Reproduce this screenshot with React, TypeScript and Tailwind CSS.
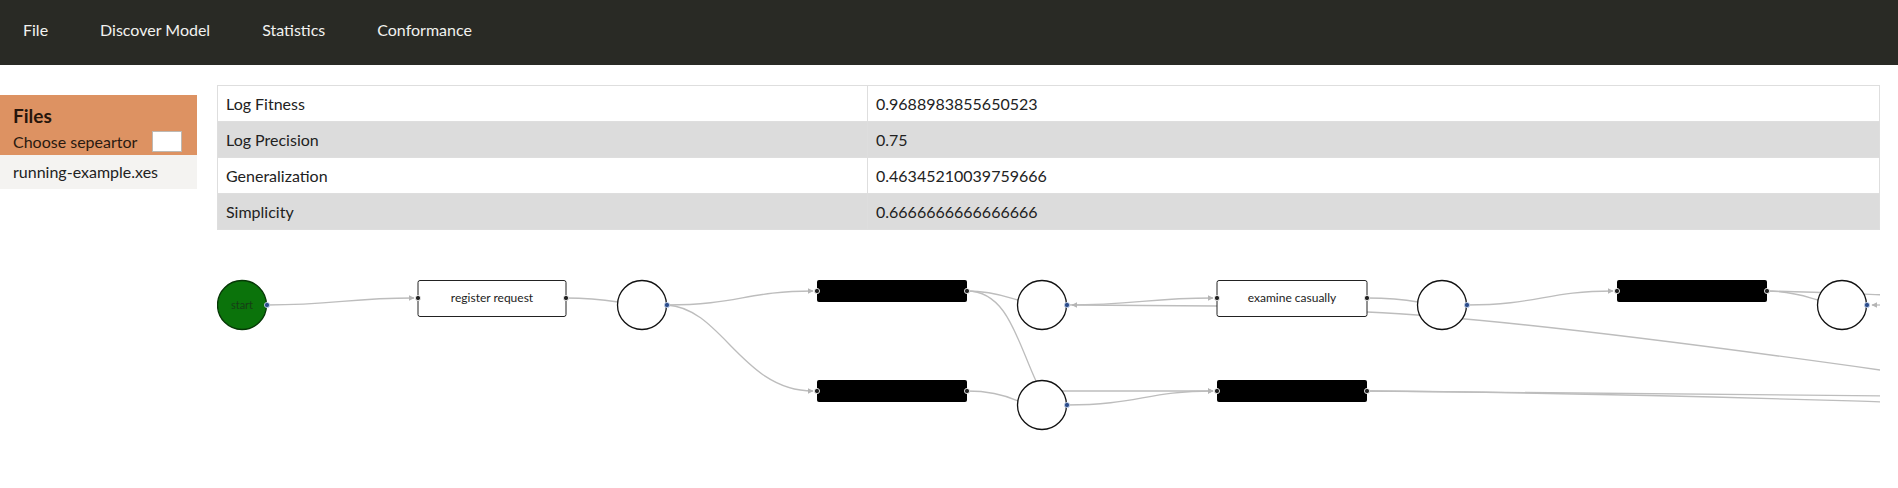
import React from "react";

type Metric = { name: string; value: string };

const metrics: Metric[] = [
    { name: "Log Fitness", value: "0.9688983855650523" },
    { name: "Log Precision", value: "0.75" },
    { name: "Generalization", value: "0.46345210039759666" },
    { name: "Simplicity", value: "0.6666666666666666" },
];

const navItems = ["File", "Discover Model", "Statistics", "Conformance"];

// places of the petri net (x, y in svg coords)
const places = [
    { x: 425, y: 75 },
    { x: 825, y: 75 },
    { x: 825, y: 175 },
    { x: 1225, y: 75 },
    { x: 1625, y: 75 },
];

// silent transitions (black bars)
const bars = [
    { x: 600, y: 50 },
    { x: 600, y: 150 },
    { x: 1000, y: 150 },
    { x: 1400, y: 50 },
];

const edges = [
    { d: "M 50 75 C 120 75, 130 68, 197 68", arrow: true },
    { d: "M 349 68 C 375 68, 388 70, 401 72", arrow: false },
    { d: "M 450 75 C 520 75, 530 61, 596 61", arrow: true },
    { d: "M 450 75 C 505 78, 525 161, 596 161", arrow: true },
    { d: "M 750 61 C 775 61, 790 67, 801 70", arrow: false },
    { d: "M 750 61 C 790 61, 800 110, 819 151", arrow: false },
    { d: "M 750 161 C 775 161, 790 166, 801 171", arrow: false },
    { d: "M 830 161 L 996 161", arrow: true },
    { d: "M 850 175 C 920 175, 930 161, 996 161", arrow: true },
    { d: "M 850 75 C 920 75, 930 68, 996 68", arrow: true },
    { d: "M 1000 76 L 855 75", arrow: true },
    { d: "M 1150 68 C 1175 68, 1190 70, 1201 72", arrow: false },
    { d: "M 1150 82 C 1250 86, 1450 110, 1670 141", arrow: false },
    { d: "M 1250 75 C 1320 75, 1330 61, 1396 61", arrow: true },
    { d: "M 1550 61 C 1575 61, 1590 67, 1601 70", arrow: false },
    { d: "M 1550 61 C 1600 62, 1640 64, 1670 65", arrow: false },
    { d: "M 1670 75 L 1655 75", arrow: true },
    { d: "M 1150 161 C 1400 162, 1600 164, 1670 166", arrow: false },
    { d: "M 1150 161 C 1400 163, 1600 170, 1670 172", arrow: false },
];

const blackDots = [
    [201, 68], [349, 68], [600, 61], [750, 61], [600, 161], [750, 161],
    [1000, 68], [1150, 68], [1000, 161], [1150, 161], [1400, 61], [1550, 61],
];

const blueDots = [
    [50, 75], [450, 75], [850, 75], [850, 175], [1250, 75], [1650, 75],
];

function PetriNet() {
    return (
        <svg width="100%" height="258" className="block overflow-hidden">
            <defs>
                <marker
                    id="arrow"
                    viewBox="0 0 10 10"
                    refX="9"
                    refY="5"
                    markerWidth="6"
                    markerHeight="6"
                    markerUnits="userSpaceOnUse"
                    orient="auto"
                >
                    <path d="M 0 0 L 10 5 L 0 10 z" fill="#b5b5b5" />
                </marker>
            </defs>

            {edges.map((e, i) => (
                <path
                    key={i}
                    d={e.d}
                    fill="none"
                    stroke="#bdbdbd"
                    strokeWidth="1.3"
                    markerEnd={e.arrow ? "url(#arrow)" : undefined}
                />
            ))}

            {/* start place */}
            <circle cx="25" cy="75" r="24.5" fill="#0b730b" stroke="#063806" strokeWidth="1.3" />
            <text x="25" y="79" textAnchor="middle" fontSize="11" fill="#173d17" fontFamily="Lato, sans-serif">
                start
            </text>

            {places.map((p, i) => (
                <circle key={i} cx={p.x} cy={p.y} r="24.5" fill="#fff" stroke="#111" strokeWidth="1.3" />
            ))}

            {/* visible transitions */}
            <rect x="201" y="50.5" width="148" height="36" rx="2" fill="#fff" stroke="#222" strokeWidth="1" />
            <text x="275" y="72" textAnchor="middle" fontSize="12" fill="#222" fontFamily="Lato, sans-serif">
                register request
            </text>
            <rect x="1000" y="50.5" width="150" height="36" rx="2" fill="#fff" stroke="#222" strokeWidth="1" />
            <text x="1075" y="72" textAnchor="middle" fontSize="12" fill="#222" fontFamily="Lato, sans-serif">
                examine casually
            </text>

            {bars.map((b, i) => (
                <rect key={i} x={b.x} y={b.y} width="150" height="22" rx="2" fill="#000" />
            ))}

            {blackDots.map(([x, y], i) => (
                <circle key={i} cx={x} cy={y} r="2.6" fill="#222" stroke="#fff" strokeWidth="0.8" />
            ))}
            {blueDots.map(([x, y], i) => (
                <circle key={i} cx={x} cy={y} r="2.6" fill="#2c4d8c" stroke="#cfdcf0" strokeWidth="0.8" />
            ))}
        </svg>
    );
}

export default function App() {
    return (
        <div className="min-h-[488px] bg-white font-['Lato',sans-serif] text-[#222]">
            <header className="h-[65px] bg-[#292a25] flex items-center pl-[23px] pb-[5px] gap-[52px]">
                {navItems.map((item) => (
                    <span key={item} className="text-[16px] text-[#f2f2f0]">
                        {item}
                    </span>
                ))}
            </header>

            <div className="flex">
                <aside className="w-[197px] mt-[30px] shrink-0">
                    <div className="bg-[#dd9262] h-[60px] pl-[13px] pt-[9px]">
                        <div className="text-[19px] font-bold text-[#26160c] leading-[24px]">Files</div>
                        <div className="flex items-center justify-between pr-[15px] mt-[3px]">
                            <span className="text-[16px] text-[#2a1a10] leading-[20px]">Choose sepeartor</span>
                            <span className="w-[30px] h-[21px] bg-white border border-[#bdb8b2]" />
                        </div>
                    </div>
                    <div className="bg-[#f4f3f1] h-[34px] pl-[13px] flex items-center text-[16px] text-[#222]">
                        running-example.xes
                    </div>
                </aside>

                <main className="flex-1 ml-[20px] mr-[18px] mt-[20px] min-w-0">
                    <table className="w-full border-collapse text-[16px]">
                        <tbody>
                            {metrics.map((m, i) => (
                                <tr key={m.name} className={i % 2 === 1 ? "bg-[#dcdcdc]" : "bg-white"}>
                                    <td className="w-[650px] h-[36px] px-[8px] border border-[#dedede]">{m.name}</td>
                                    <td className="h-[36px] px-[8px] border border-[#dedede]">{m.value}</td>
                                </tr>
                            ))}
                        </tbody>
                    </table>
                    <PetriNet />
                </main>
            </div>
        </div>
    );
}
